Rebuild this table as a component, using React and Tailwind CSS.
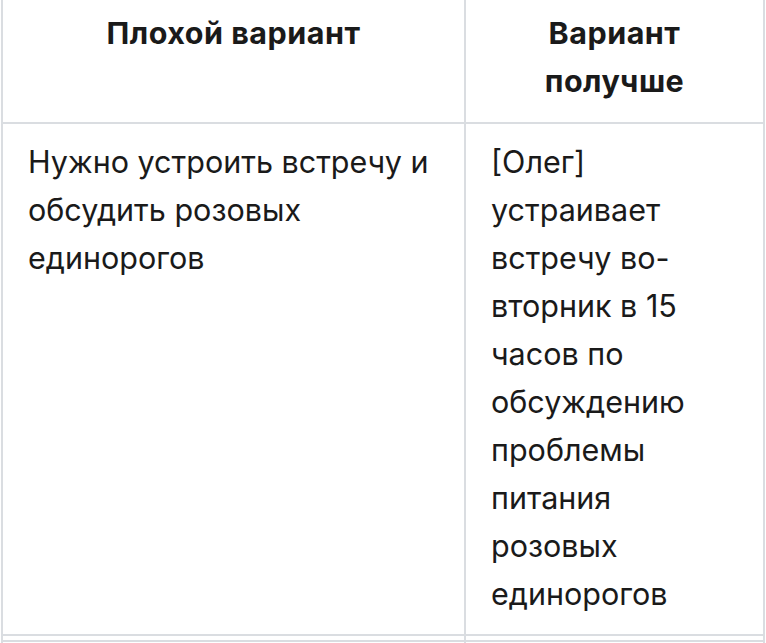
import React from 'react';

const rows = [
  {
    bad: 'Нужно устроить встречу и обсудить розовых единорогов',
    good: '[Олег] устраивает встречу во-вторник в 15 часов по обсуждению проблемы питания розовых единорогов',
  },
];

const App = () => {
  return (
    <div className="h-[643px] w-[766px] overflow-hidden bg-white pl-px text-[#1a1a1a] [font-family:Inter,'Noto_Sans',sans-serif]">
      <table className="mt-[-8px] w-[764px] border-collapse text-[30.5px] leading-[48px]">
        <thead>
          <tr>
            <th className="w-[463px] border-2 border-[#dadde1] px-[25px] pt-[15px] pb-[17px] text-center align-top font-bold tracking-[0.5px]">
              Плохой вариант
            </th>
            <th className="border-2 border-[#dadde1] px-[25px] pt-[15px] pb-[17px] text-center align-top font-bold tracking-[0.5px]">
              Вариант получше
            </th>
          </tr>
        </thead>
        <tbody>
          {rows.map((row, i) => (
            <tr key={i}>
              <td className="border-2 border-[#dadde1] px-[25px] pt-[14px] pb-[16px] text-left align-top font-normal">
                {row.bad}
              </td>
              <td className="border-2 border-[#dadde1] px-[25px] pt-[14px] pb-[16px] text-left align-top font-normal">
                {row.good}
              </td>
            </tr>
          ))}
          <tr>
            <td className="h-[6px] border-2 border-[#dadde1] p-0 leading-[0]"></td>
            <td className="h-[6px] border-2 border-[#dadde1] p-0 leading-[0]"></td>
          </tr>
          <tr>
            <td className="h-[60px] border-2 border-[#dadde1]"></td>
            <td className="h-[60px] border-2 border-[#dadde1]"></td>
          </tr>
        </tbody>
      </table>
    </div>
  );
};

export default App;
